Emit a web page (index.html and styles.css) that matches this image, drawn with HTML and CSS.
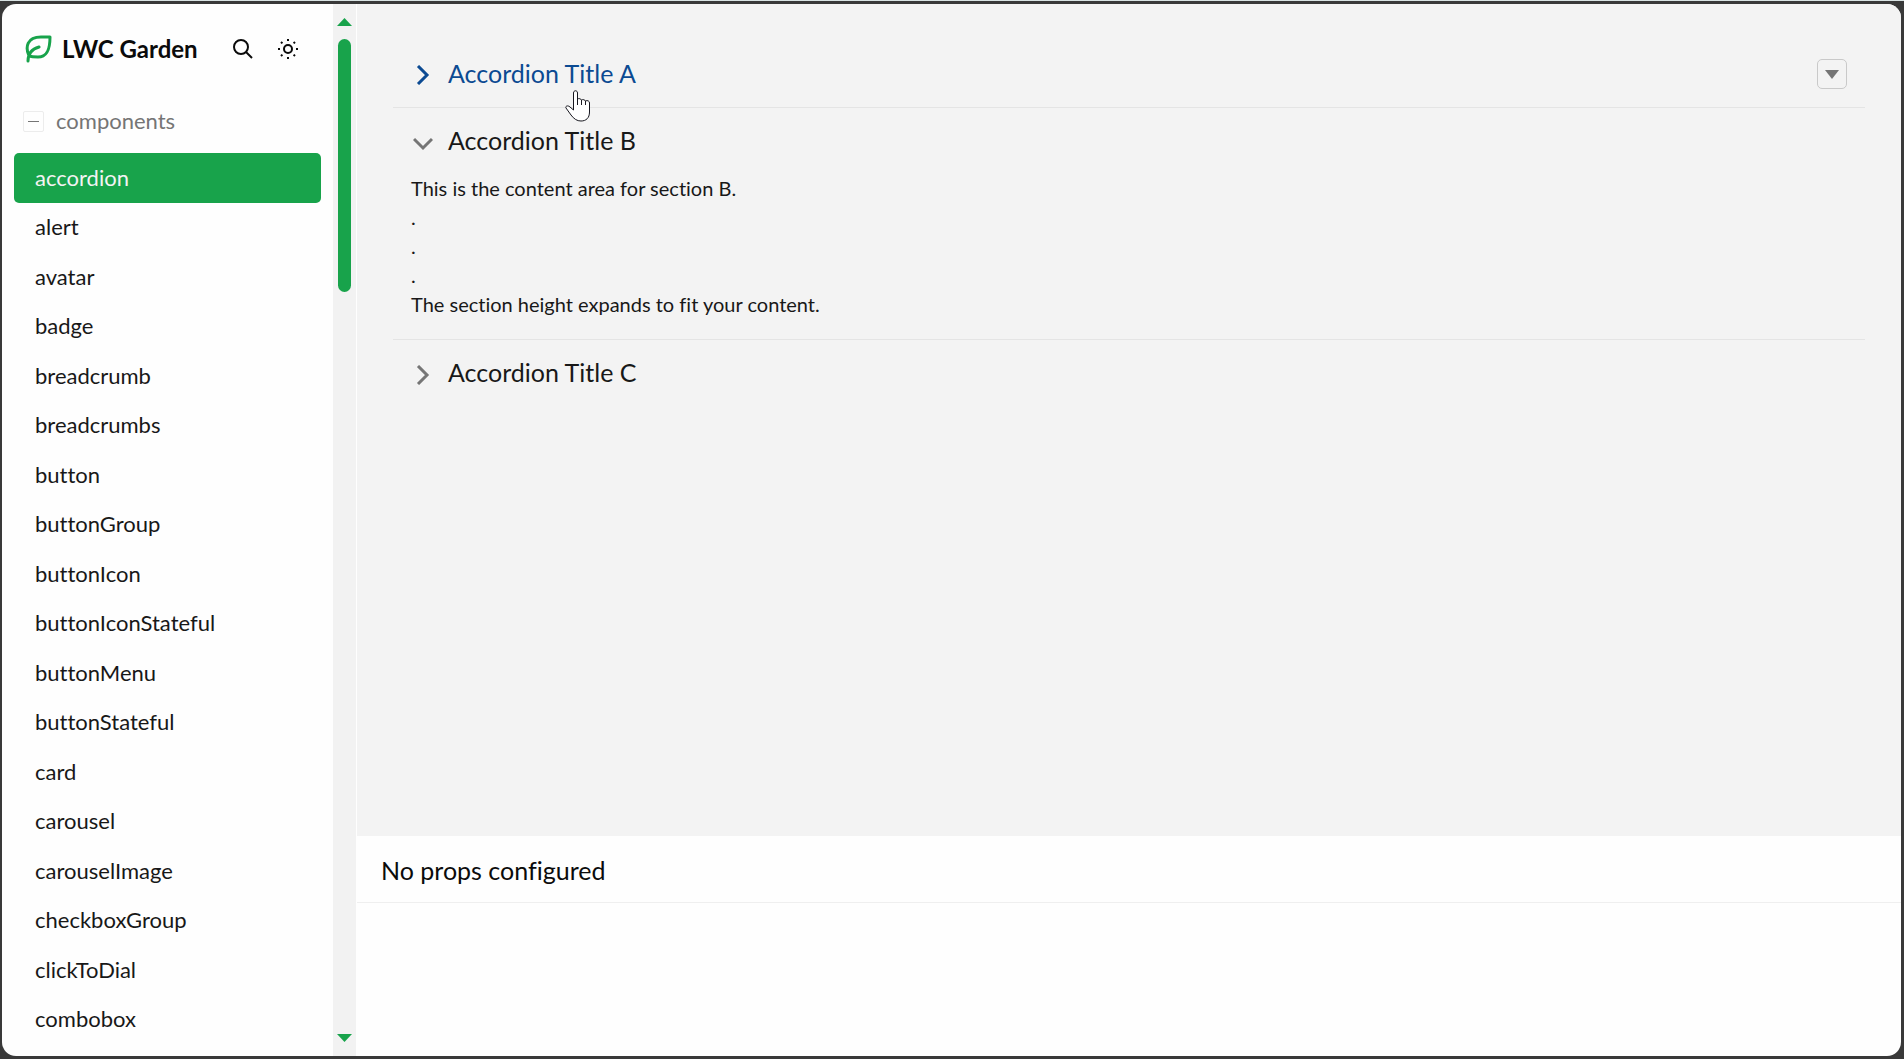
FILE: index.html
```html
<!DOCTYPE html>
<html lang="en">
<head>
<meta charset="utf-8">
<meta name="viewport" content="width=device-width, initial-scale=1">
<title>LWC Garden</title>
<link rel="stylesheet" href="styles.css">
</head>
<body>
<div class="window">
  <aside class="sidebar">
    <header class="brand">
      <a class="brand-link" href="#">
        <svg class="leaf" viewBox="0 0 27 28" aria-hidden="true"><path d="M25 2C25 13 23 22 13 22C10 22 7 22 4 21C0 12 2 2 16 2Z M3 26C3 19 7 14 14 12"/></svg>
        <span>LWC Garden</span>
      </a>
      <button class="icon-button" type="button" aria-label="Search">
        <svg viewBox="0 0 20 20" aria-hidden="true"><circle cx="8" cy="8" r="7"/><path d="M13 13L19 19"/></svg>
      </button>
      <button class="icon-button" type="button" aria-label="Toggle theme">
        <svg viewBox="0 0 20 20" aria-hidden="true"><circle cx="10" cy="10" r="4"/><path d="M10 0V2 M10 18V20 M0 10H2 M18 10H20 M3 3L4.400 4.400 M15.600 15.600L17 17 M3 17L4.400 15.600 M15.600 4.400L17 3"/></svg>
      </button>
    </header>
    <div class="group">
      <button class="collapse" type="button" aria-label="Collapse components" aria-expanded="true"></button>
      <span>components</span>
    </div>
    <nav class="nav" aria-label="Components">
      <a class="nav-item active" href="#" aria-current="page">accordion</a>
      <a class="nav-item" href="#">alert</a>
      <a class="nav-item" href="#">avatar</a>
      <a class="nav-item" href="#">badge</a>
      <a class="nav-item" href="#">breadcrumb</a>
      <a class="nav-item" href="#">breadcrumbs</a>
      <a class="nav-item" href="#">button</a>
      <a class="nav-item" href="#">buttonGroup</a>
      <a class="nav-item" href="#">buttonIcon</a>
      <a class="nav-item" href="#">buttonIconStateful</a>
      <a class="nav-item" href="#">buttonMenu</a>
      <a class="nav-item" href="#">buttonStateful</a>
      <a class="nav-item" href="#">card</a>
      <a class="nav-item" href="#">carousel</a>
      <a class="nav-item" href="#">carouselImage</a>
      <a class="nav-item" href="#">checkboxGroup</a>
      <a class="nav-item" href="#">clickToDial</a>
      <a class="nav-item" href="#">combobox</a>
    </nav>
  </aside>
  <div class="scrollbar" aria-hidden="true">
    <svg class="scroll-arrow" viewBox="0 0 15 8"><path d="M0 8L7.500 0L15 8Z"/></svg>
    <div class="thumb"></div>
    <svg class="scroll-arrow" viewBox="0 0 15 8"><path d="M0 0H15L7.500 8Z"/></svg>
  </div>
  <main class="main">
    <div class="stage">
      <section class="section">
        <div class="section-head">
          <button class="toggle hovered" type="button" aria-expanded="false">
            <svg class="chevron" viewBox="0 0 20 20" aria-hidden="true"><path d="M5 1L14 10L5 19"/></svg>
            <span>Accordion Title A</span>
          </button>
          <svg class="pointer" viewBox="0 0 26 32" aria-hidden="true"><path d="M8.500 19V3C8.500 0 12.500 0 12.500 3V9C14 8 16 9 16.500 10C18 9 20 10 20.500 11C22.500 10 24.500 11 24.500 13V22C24.500 28 21 31 16 31C12 31 9 29 6 25L1 18C0 16 3 15 5 17L8.500 20Z M12.500 9V15 M16.500 10V15 M20.500 11V15"/></svg>
          <button class="menu" type="button" aria-label="Show menu">
            <svg viewBox="0 0 14 9" aria-hidden="true"><path d="M0 0H14L7 9Z"/></svg>
          </button>
        </div>
      </section>
      <section class="section">
        <div class="section-head">
          <button class="toggle" type="button" aria-expanded="true">
            <svg class="chevron" viewBox="0 0 20 20" aria-hidden="true"><path d="M1 6L10 15L19 6"/></svg>
            <span>Accordion Title B</span>
          </button>
        </div>
        <div class="content">
          <p>This is the content area for section B.</p>
          <p>.</p>
          <p>.</p>
          <p>.</p>
          <p>The section height expands to fit your content.</p>
        </div>
      </section>
      <section class="section">
        <div class="section-head">
          <button class="toggle" type="button" aria-expanded="false">
            <svg class="chevron" viewBox="0 0 20 20" aria-hidden="true"><path d="M5 1L14 10L5 19"/></svg>
            <span>Accordion Title C</span>
          </button>
        </div>
      </section>
    </div>
    <section class="props">
      <h2 class="props-title">No props configured</h2>
    </section>
  </main>
</div>
</body>
</html>
```
FILE: styles.css
```css
:root {
  --green: #18a34b;
  --panel: #f3f3f3;
  --blue: #0b4a92;
  --ink: #181818;
}

* { box-sizing: border-box; }

body {
  margin: 0;
  min-height: 100vh;
  display: flex;
  padding: 3px 3px 3px 2px;
  border-top: 1px solid #d9e3e3;
  background: #393939;
  color: var(--ink);
  font-family: Lato, "Open Sans", sans-serif;
  font-variant-ligatures: none;
}

button {
  padding: 0;
  border: 0;
  background: none;
  color: inherit;
  font: inherit;
  font-variant-ligatures: none;
  cursor: pointer;
}

a { color: inherit; text-decoration: none; }

svg { display: block; }

.window {
  flex: 1;
  display: flex;
  overflow: hidden;
  border-radius: 14px;
  background: #fefefe;
}

/* Sidebar */
.sidebar {
  flex: 0 0 331px;
  display: flex;
  flex-direction: column;
  padding: 15px 12px 12px;
}

.brand {
  display: flex;
  align-items: center;
  gap: 25px;
  height: 60px;
  padding: 0 23px 0 11px;
  color: #0b0b0b;
}

.brand-link {
  flex: 1;
  display: flex;
  align-items: center;
  gap: 10px;
  font-size: 24px;
  font-weight: 700;
  line-height: 32px;
  white-space: nowrap;
}

.leaf {
  width: 27px;
  height: 28px;
  fill: none;
  stroke: var(--green);
  stroke-width: 3;
  stroke-linecap: round;
  stroke-linejoin: round;
}

.icon-button svg {
  width: 20px;
  height: 20px;
  fill: none;
  stroke: currentColor;
  stroke-width: 2;
}

.group {
  display: flex;
  align-items: center;
  gap: 12px;
  height: 60px;
  margin-bottom: 14px;
  padding: 24px 9px 0;
  color: #757575;
  font-size: 22px;
  line-height: 36px;
}

.collapse {
  width: 21px;
  height: 21px;
  display: flex;
  align-items: center;
  justify-content: center;
  border: 1px solid #ececec;
  border-radius: 2px;
}

.collapse::before {
  content: "";
  width: 11px;
  height: 1px;
  background: #757575;
}

.nav {
  flex: 1;
  display: flex;
  flex-direction: column;
}

.nav-item {
  flex: 1 0 auto;
  display: flex;
  align-items: center;
  padding: 6px 21px;
  border-radius: 5px;
  font-size: 22px;
  line-height: 36px;
}

.nav-item.active {
  background: var(--green);
  color: #f3f3f3;
}

.scrollbar {
  flex: 0 0 23px;
  display: flex;
  flex-direction: column;
  align-items: center;
  padding: 14px 0;
  background: #f2f2f2;
}

.scroll-arrow {
  width: 15px;
  height: 8px;
  fill: var(--green);
}

.thumb {
  width: 13px;
  height: 253px;
  margin: 13px 0 auto;
  border-radius: 7px;
  background: var(--green);
}

/* Preview and props */
.main {
  flex: 1;
  min-width: 0;
  display: flex;
  flex-direction: column;
  border-left: 1px solid #fefefe;
}

.stage {
  flex: 1;
  padding: 36px;
  background: var(--panel);
}

.section + .section { border-top: 1px solid #e4e4e4; }

.section-head {
  position: relative;
  display: flex;
  align-items: center;
  justify-content: space-between;
  height: 66px;
  padding: 0 18px;
}

.section:first-child .section-head { height: 67px; }

.toggle {
  display: flex;
  align-items: center;
  gap: 15px;
  padding: 0 0 2px 2px;
  font-size: 25px;
  line-height: 36px;
}

.toggle.hovered { color: var(--blue); }

.chevron {
  width: 20px;
  height: 20px;
  margin-top: 5px;
  fill: none;
  stroke: #757575;
  stroke-width: 3;
}

.hovered .chevron {
  stroke: var(--blue);
}

.pointer {
  position: absolute;
  top: 50px;
  left: 172px;
  width: 26px;
  height: 32px;
  fill: #fff;
  stroke: #17171f;
  stroke-width: 1;
  stroke-linejoin: round;
  z-index: 1;
}

.menu {
  display: flex;
  align-items: center;
  justify-content: center;
  width: 30px;
  height: 30px;
  padding-top: 2px;
  border: 1px solid #c9c9c9;
  border-radius: 5px;
}

.menu svg {
  width: 14px;
  height: 9px;
  fill: #757575;
}

.content {
  padding: 0 18px 20px;
  font-size: 20px;
  line-height: 29px;
}

.content p { margin: 0; }

.props { flex: 0 0 220px; }

.props-title {
  margin: 0;
  padding: 16px 24px 14px;
  border-bottom: 1px solid #efefef;
  color: #0b0b0b;
  font-size: 25px;
  font-weight: 400;
  line-height: 36px;
}
```
